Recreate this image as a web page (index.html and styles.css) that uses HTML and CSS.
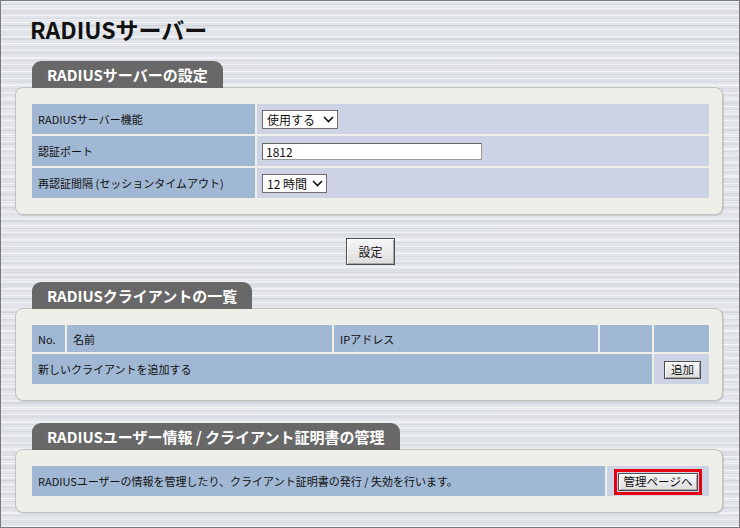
FILE: index.html
```html
<!DOCTYPE html>
<html lang="ja">
<head>
    <meta charset="UTF-8">
    <meta name="viewport" content="width=device-width, initial-scale=1.0">
    <title>RADIUSサーバー</title>
    <link rel="stylesheet" href="styles.css">
</head>
<body>
<div class="page">
    <h1 class="title">RADIUSサーバー</h1>

    <section class="box box-first">
        <div class="tab">RADIUSサーバーの設定</div>
        <div class="panel">
            <table class="grid">
                <colgroup>
                    <col class="c-label">
                    <col>
                </colgroup>
                <tr>
                    <th>RADIUSサーバー機能</th>
                    <td class="val">
                        <label class="select sel-use">
                            <select><option>使用する</option><option>使用しない</option></select>
                            <svg width="11" height="7" viewBox="0 0 11 7"><path d="M1 1l4.5 4.5L10 1" fill="none" stroke="#111" stroke-width="1.6"/></svg>
                        </label>
                    </td>
                </tr>
                <tr>
                    <th>認証ポート</th>
                    <td class="val"><input type="text" class="text" value="1812"></td>
                </tr>
                <tr>
                    <th>再認証間隔 (セッションタイムアウト)</th>
                    <td class="val">
                        <label class="select sel-time">
                            <select><option>12 時間</option><option>24 時間</option></select>
                            <svg width="11" height="7" viewBox="0 0 11 7"><path d="M1 1l4.5 4.5L10 1" fill="none" stroke="#111" stroke-width="1.6"/></svg>
                        </label>
                    </td>
                </tr>
            </table>
        </div>
    </section>

    <div class="actions">
        <button type="button" class="btn btn-set">設定</button>
    </div>

    <section class="box box-second">
        <div class="tab">RADIUSクライアントの一覧</div>
        <div class="panel">
            <table class="grid list">
                <colgroup>
                    <col class="c-no">
                    <col class="c-name">
                    <col class="c-ip">
                    <col class="c-e1">
                    <col class="c-e2">
                </colgroup>
                <tr class="head">
                    <th>No.</th>
                    <th>名前</th>
                    <th>IPアドレス</th>
                    <th></th>
                    <th></th>
                </tr>
                <tr>
                    <th colspan="4">新しいクライアントを追加する</th>
                    <td class="val center"><button type="button" class="btn btn-small btn-add">追加</button></td>
                </tr>
            </table>
        </div>
    </section>

    <section class="box box-third">
        <div class="tab">RADIUSユーザー情報 / クライアント証明書の管理</div>
        <div class="panel">
            <table class="grid">
                <colgroup>
                    <col class="c-info">
                    <col>
                </colgroup>
                <tr>
                    <th>RADIUSユーザーの情報を管理したり、クライアント証明書の発行 / 失効を行います。</th>
                    <td class="val center"><button type="button" class="btn btn-small btn-mark">管理ページへ</button></td>
                </tr>
            </table>
        </div>
    </section>
</div>
</body>
</html>
```

FILE: styles.css
```css
html, body {
    margin: 0;
    padding: 0;
}
body {
    font-family: "Noto Sans CJK JP", "Noto Sans", sans-serif;
    color: #111;
}
.page {
    box-sizing: border-box;
    min-height: 528px;
    border: 1px solid #7b7b7b;
    padding: 0 16px 0 14px;
    background-color: #e2e5ea;
    background-image:
        repeating-linear-gradient(180deg, rgba(255,255,255,.55) 0 1px, transparent 1px 3px, rgba(150,160,175,.16) 3px 4px, transparent 4px 7px),
        repeating-linear-gradient(180deg, transparent 0 5px, rgba(255,255,255,.4) 5px 6px, transparent 6px 11px, rgba(170,178,190,.12) 11px 13px);
}
.title {
    margin: 13px 0 0 15px;
    font-size: 23px;
    line-height: 30px;
    font-weight: bold;
    color: #111;
}

/* sections */
.box {
    display: flex;
    flex-direction: column;
    align-items: flex-start;
}
.box-first { margin-top: 17px; }
.box-second { margin-top: 17px; }
.box-third { margin-top: 22px; }
.tab {
    position: relative;
    z-index: 1;
    margin: 0 0 -1px 17px;
    padding: 0 15px;
    height: 27px;
    line-height: 27px;
    font-size: 15px;
    font-weight: bold;
    color: #fff;
    background-color: #686868;
    border-radius: 9px 9px 0 0;
    white-space: nowrap;
}
.panel {
    align-self: stretch;
    background-color: #efefea;
    border: 1px solid #c3c3be;
    border-radius: 8px;
    box-shadow: 1px 1px 1px rgba(0,0,0,.12);
    padding: 14px 11px 14px 14px;
}

/* tables */
.grid {
    width: 100%;
    border-collapse: separate;
    border-spacing: 2px;
    table-layout: fixed;
}
.c-label { width: 223px; }
.c-no { width: 33px; }
.c-name { width: 265px; }
.c-ip { width: 264px; }
.c-e1 { width: 52px; }
.c-e2 { width: 55px; }
.c-info { width: 573px; }
.grid th, .grid td {
    height: 30px;
    padding: 0 6px;
    font-size: 11px;
    font-weight: normal;
    text-align: left;
    vertical-align: middle;
    white-space: nowrap;
    background-color: #a1b8d4;
}
.grid td.val {
    background-color: #cdd3e4;
    padding-left: 5px;
}
.grid tr.head th {
    height: 27px;
}
.grid td.center {
    text-align: center;
    padding: 0;
}

/* form controls */
.select {
    display: inline-flex;
    align-items: center;
    box-sizing: border-box;
    height: 19px;
    background: #fff;
    border: 1px solid #6f6f6f;
    vertical-align: middle;
}
.select select {
    appearance: none;
    -webkit-appearance: none;
    border: none;
    outline: none;
    background: transparent;
    font-family: inherit;
    font-size: 12px;
    color: #111;
    padding: 0 0 0 4px;
    margin: 0;
    height: 17px;
    line-height: 17px;
}
.sel-use { width: 76px; }
.sel-use select { width: 58px; }
.sel-time { width: 65px; }
.sel-time select { width: 47px; }
.select svg {
    margin-left: 2px;
}
.text {
    box-sizing: border-box;
    width: 220px;
    height: 17px;
    margin: 0;
    padding: 0 3px;
    border: 1px solid #666;
    border-right-color: #9a9a9a;
    border-bottom-color: #9a9a9a;
    font-family: inherit;
    font-size: 12px;
    color: #111;
    vertical-align: middle;
}

/* buttons */
.actions {
    margin-top: 23px;
    text-align: center;
    padding-left: 3px;
}
.btn {
    box-sizing: border-box;
    font-family: inherit;
    font-size: 12px;
    color: #111;
    border: 1px solid #4d4d4d;
    background: linear-gradient(#f7f7f7, #dddddd);
    box-shadow: inset 1px 1px 0 #fff, inset -1px -1px 0 #a8a8a8;
    padding: 0;
    cursor: pointer;
}
.btn-set {
    width: 49px;
    height: 27px;
}
.btn-small {
    height: 18px;
    line-height: 15px;
    font-size: 11.5px;
    padding: 0;
    vertical-align: middle;
}
.btn-add {
    width: 37px;
    margin-left: 2px;
}
.btn-mark {
    width: 80px;
    outline: 3px solid #e60012;
    outline-offset: 1px;
}
```
